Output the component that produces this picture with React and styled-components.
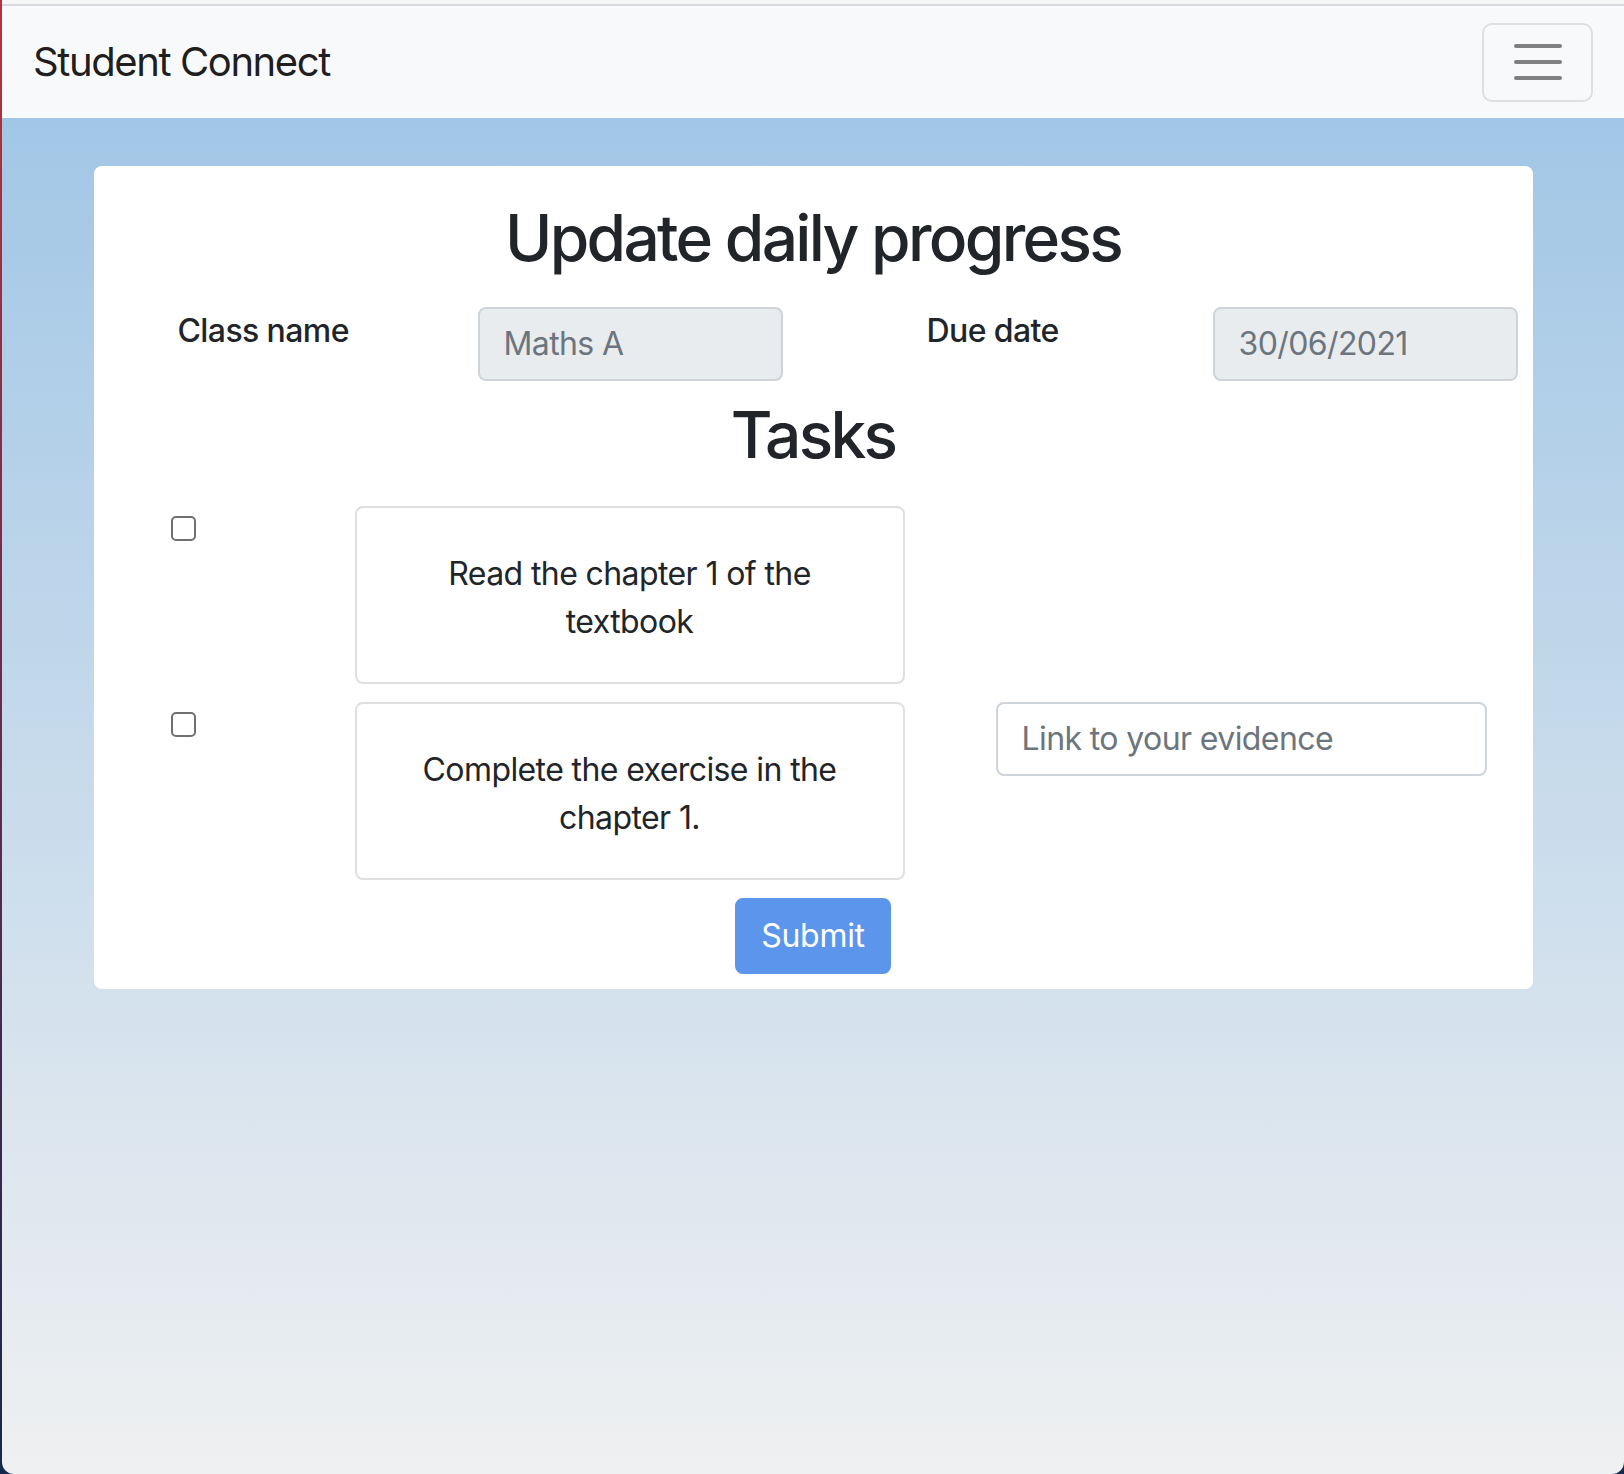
import React from 'react';
import styled, { createGlobalStyle } from 'styled-components';

const GlobalStyle = createGlobalStyle`
  * {
    box-sizing: border-box;
  }
  html,
  body {
    margin: 0;
    padding: 0;
    min-height: 100%;
  }
  body {
    background: linear-gradient(#b8323f, #6a2d4c 45%, #15284d);
    font-family: Inter, 'Noto Sans', 'Liberation Sans', sans-serif;
    color: #212529;
  }
`;

const tasks = [
  { id: 1, text: 'Read the chapter 1 of the textbook', evidence: false },
  { id: 2, text: 'Complete the exercise in the chapter 1.', evidence: true },
];

export default function App() {
  return (
    <>
      <GlobalStyle />
      <Window>
        <TopEdge />
        <NavBar>
          <Brand>Student Connect</Brand>
          <Toggler aria-label='Toggle navigation'>
            <TogglerLine />
            <TogglerLine />
            <TogglerLine />
          </Toggler>
        </NavBar>
        <Main>
          <Card>
            <Heading $gap={30}>Update daily progress</Heading>
            <FieldsRow>
              <FieldLabel>Class name</FieldLabel>
              <ReadOnlyInput readOnly value='Maths A' />
              <FieldLabel>Due date</FieldLabel>
              <ReadOnlyInput readOnly value='30/06/2021' />
            </FieldsRow>
            <Heading $gap={32}>Tasks</Heading>
            <TaskList>
              {tasks.map((task) => (
                <TaskRow key={task.id}>
                  <Checkbox type='checkbox' />
                  <TaskCard>{task.text}</TaskCard>
                  {task.evidence && (
                    <EvidenceInput placeholder='Link to your evidence' />
                  )}
                </TaskRow>
              ))}
            </TaskList>
            <SubmitButton type='button'>Submit</SubmitButton>
          </Card>
        </Main>
      </Window>
    </>
  );
}

const Window = styled.div`
  margin-left: 2px;
  min-height: 100vh;
  display: flex;
  flex-direction: column;
  border-radius: 0 0 12px 12px;
  overflow: hidden;
  background: linear-gradient(#9bc3e5, #eff0f1);
`;

const TopEdge = styled.div`
  height: 6px;
  background: #f6f6f7;
  border-bottom: 2px solid #d9dadf;
`;

const NavBar = styled.nav`
  height: 112px;
  display: flex;
  align-items: center;
  justify-content: space-between;
  padding: 0 31px 0 31px;
  background: #f8f9fa;
`;

const Brand = styled.span`
  font-size: 40px;
  line-height: 1.5;
  letter-spacing: -1.4px;
  color: rgba(0, 0, 0, 0.9);
`;

const Toggler = styled.button`
  width: 111px;
  height: 79px;
  display: flex;
  flex-direction: column;
  align-items: center;
  justify-content: center;
  gap: 12px;
  padding: 0;
  background: transparent;
  border: 2px solid rgba(0, 0, 0, 0.1);
  border-radius: 10px;
`;

const TogglerLine = styled.span`
  width: 48px;
  height: 4px;
  border-radius: 2px;
  background: #7f7f7f;
`;

const Main = styled.main`
  flex: 1;
  padding-top: 48px;
`;

const Card = styled.div`
  width: 1439px;
  margin: 0 auto;
  display: flex;
  flex-direction: column;
  padding: 34px 0 15px;
  background: #fff;
  border-radius: 8px;
`;

const Heading = styled.h2`
  margin: 0 0 ${(p) => p.$gap}px;
  font-size: 64px;
  font-weight: 500;
  line-height: 1.2;
  letter-spacing: -2.7px;
  text-align: center;
  color: #212529;
`;

const FieldsRow = styled.div`
  display: grid;
  grid-template-columns: 300px 449px 286px 305px;
  align-items: start;
  padding-left: 84px;
  margin-bottom: 16px;
`;

const FieldLabel = styled.label`
  font-size: 32px;
  font-weight: 500;
  line-height: 48px;
  letter-spacing: -0.6px;
  color: #212529;
`;

const ReadOnlyInput = styled.input`
  width: 305px;
  height: 74px;
  padding: 0 24px;
  font: inherit;
  font-size: 32px;
  letter-spacing: -0.6px;
  color: #6c757d;
  background: #e9ecef;
  border: 2px solid #ced4da;
  border-radius: 8px;
  outline: none;
`;

const TaskList = styled.div`
  display: flex;
  flex-direction: column;
  gap: 18px;
`;

const TaskRow = styled.div`
  display: grid;
  grid-template-columns: 184px 550px 582px;
  align-items: start;
  padding-left: 77px;
`;

const Checkbox = styled.input`
  appearance: none;
  width: 25px;
  height: 25px;
  margin: 10px 0 0;
  border: 2px solid #707070;
  border-radius: 5px;
  background: #fff;
`;

const TaskCard = styled.div`
  padding: 42px 40px 36px;
  font-size: 32px;
  line-height: 48px;
  letter-spacing: -0.6px;
  text-align: center;
  color: #212529;
  border: 2px solid #dfdfdf;
  border-radius: 8px;
`;

const EvidenceInput = styled.input`
  width: 491px;
  height: 74px;
  margin-left: 91px;
  padding: 0 24px;
  font: inherit;
  font-size: 32px;
  letter-spacing: -0.6px;
  color: #495057;
  background: #fff;
  border: 2px solid #ced4da;
  border-radius: 8px;
  outline: none;

  &::placeholder {
    color: #6c757d;
  }
`;

const SubmitButton = styled.button`
  align-self: center;
  margin-top: 18px;
  padding: 12px 24px;
  font: inherit;
  font-size: 32px;
  line-height: 48px;
  letter-spacing: -0.3px;
  color: #fff;
  background: #5b96ec;
  border: 2px solid #5b96ec;
  border-radius: 8px;
`;
